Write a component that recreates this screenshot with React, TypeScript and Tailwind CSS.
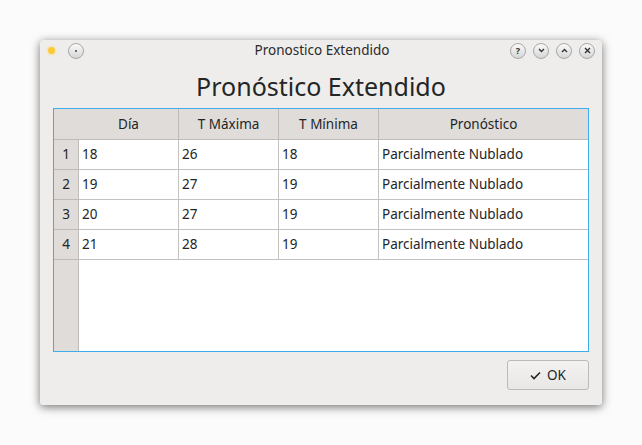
import React from "react";

const rows = [
    { n: 1, dia: "18", max: "26", min: "18", pron: "Parcialmente Nublado" },
    { n: 2, dia: "19", max: "27", min: "19", pron: "Parcialmente Nublado" },
    { n: 3, dia: "20", max: "27", min: "19", pron: "Parcialmente Nublado" },
    { n: 4, dia: "21", max: "28", min: "19", pron: "Parcialmente Nublado" },
];

function TitleButton({ children }: { children: React.ReactNode }) {
    return (
        <div className="w-[16px] h-[16px] rounded-full border border-[#a8a8a8] bg-gradient-to-b from-[#fafafa] to-[#d6d6d6] flex items-center justify-center text-[#333]">
            {children}
        </div>
    );
}

export default function App() {
    return (
        <div
            className="w-[642px] h-[445px] bg-[#fbfbfb] pt-[40px] pl-[40px]"
            style={{ fontFamily: '"Noto Sans", "Open Sans", sans-serif' }}
        >
            <div className="w-[562px] h-[365px] bg-[#efedeb] rounded-t-[4px] rounded-b-[3px] shadow-[0_2px_10px_rgba(0,0,0,0.55)] flex flex-col">
                {/* title bar */}
                <div className="h-[21px] flex items-center pl-[8px] pr-[7px]">
                    <div className="w-[7px] h-[7px] rounded-full bg-[#fcc93a] shadow-[0_0_3px_#ffd85a]" />
                    <div className="ml-[13px]">
                        <TitleButton>
                            <div className="w-[2px] h-[2px] rounded-full bg-[#444]" />
                        </TitleButton>
                    </div>
                    <div className="flex-1 text-center text-[13.5px] text-[#2b2b2b] leading-none pl-[50px]">
                        Pronostico Extendido
                    </div>
                    <div className="flex gap-[7px]">
                        <TitleButton>
                            <span className="text-[9px] font-bold leading-none">?</span>
                        </TitleButton>
                        <TitleButton>
                            <svg width="7" height="5" viewBox="0 0 7 5"><path d="M1 1 L3.5 3.5 L6 1" stroke="#333" strokeWidth="1.4" fill="none" /></svg>
                        </TitleButton>
                        <TitleButton>
                            <svg width="7" height="5" viewBox="0 0 7 5"><path d="M1 4 L3.5 1.5 L6 4" stroke="#333" strokeWidth="1.4" fill="none" /></svg>
                        </TitleButton>
                        <TitleButton>
                            <svg width="7" height="7" viewBox="0 0 7 7"><path d="M1 1 L6 6 M6 1 L1 6" stroke="#333" strokeWidth="1.4" fill="none" /></svg>
                        </TitleButton>
                    </div>
                </div>

                <h1 className="text-[25px] text-[#232627] text-center leading-none mt-[13px] h-[34px]">
                    Pronóstico Extendido
                </h1>

                {/* table */}
                <div className="mx-[13px] h-[244px] border border-[#3daee9] bg-white flex flex-col text-[13.5px] text-[#232627]">
                    <div className="flex h-[31px] bg-[#dfdcd9] border-b border-[#bdbab7]">
                        <div className="w-[25px]" />
                        <div className="w-[100px] flex items-center justify-center border-r border-[#bdbab7]">Día</div>
                        <div className="w-[100px] flex items-center justify-center border-r border-[#bdbab7]">T Máxima</div>
                        <div className="w-[100px] flex items-center justify-center border-r border-[#bdbab7]">T Mínima</div>
                        <div className="flex-1 flex items-center justify-center">Pronóstico</div>
                    </div>
                    <div className="flex flex-1">
                        <div className="w-[25px] bg-[#dfdcd9] border-r border-[#bdbab7] flex flex-col">
                            {rows.map((r) => (
                                <div key={r.n} className="h-[30px] border-b border-[#bdbab7] flex items-center justify-center">
                                    {r.n}
                                </div>
                            ))}
                        </div>
                        <div className="flex-1 flex flex-col">
                            {rows.map((r) => (
                                <div key={r.n} className="h-[30px] flex border-b border-[#c4c2c0]">
                                    <div className="w-[100px] px-[3px] flex items-center border-r border-[#c4c2c0]">{r.dia}</div>
                                    <div className="w-[100px] px-[3px] flex items-center border-r border-[#c4c2c0]">{r.max}</div>
                                    <div className="w-[100px] px-[3px] flex items-center border-r border-[#c4c2c0]">{r.min}</div>
                                    <div className="flex-1 px-[3px] flex items-center">{r.pron}</div>
                                </div>
                            ))}
                        </div>
                    </div>
                </div>

                <div className="flex justify-end mx-[13px] mt-[8px]">
                    <button className="w-[82px] h-[30px] border border-[#bcbab8] rounded-[3px] bg-gradient-to-b from-[#f3f2f1] to-[#e9e7e5] flex items-center justify-center gap-[6px] text-[13.5px] text-[#232627]">
                        <svg width="11" height="9" viewBox="0 0 11 9"><path d="M1 4.5 L4 7.5 L10 1.5" stroke="#232627" strokeWidth="1.6" fill="none" /></svg>
                        OK
                    </button>
                </div>
            </div>
        </div>
    );
}
